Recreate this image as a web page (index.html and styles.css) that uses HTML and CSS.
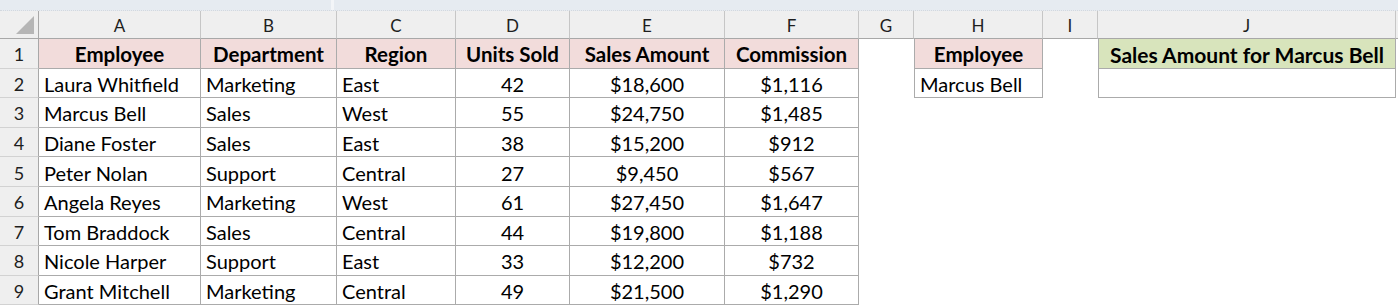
FILE: index.html
```html
<!DOCTYPE html>
<html lang="en">
<head>
<meta charset="utf-8">
<title>Sheet</title>
<link rel="stylesheet" href="styles.css">
</head>
<body>
<div class="topbar"><div class="seg seg-a"></div><div class="seg seg-b"></div></div>
<div class="sheet">
  <div class="corner"><span class="tri"></span></div>
  <div class="colhead">A</div>
  <div class="colhead">B</div>
  <div class="colhead">C</div>
  <div class="colhead">D</div>
  <div class="colhead">E</div>
  <div class="colhead">F</div>
  <div class="colhead">G</div>
  <div class="colhead">H</div>
  <div class="colhead">I</div>
  <div class="colhead">J</div>
  <div class="colhead edge"></div>

  <div class="rowhead">1</div>
  <div class="cell th">Employee</div>
  <div class="cell th">Department</div>
  <div class="cell th">Region</div>
  <div class="cell th">Units Sold</div>
  <div class="cell th">Sales Amount</div>
  <div class="cell th">Commission</div>
  <div class="blank"></div>
  <div class="cell th lb">Employee</div>
  <div class="blank"></div>
  <div class="cell th green lb">Sales Amount for Marcus Bell</div>
  <div class="blank"></div>

  <div class="rowhead">2</div>
  <div class="cell">Laura Whitfield</div>
  <div class="cell">Marketing</div>
  <div class="cell">East</div>
  <div class="cell c">42</div>
  <div class="cell c">$18,600</div>
  <div class="cell c">$1,116</div>
  <div class="blank"></div>
  <div class="cell lb">Marcus Bell</div>
  <div class="blank"></div>
  <div class="cell lb"></div>
  <div class="blank"></div>

  <div class="rowhead">3</div>
  <div class="cell">Marcus Bell</div>
  <div class="cell">Sales</div>
  <div class="cell">West</div>
  <div class="cell c">55</div>
  <div class="cell c">$24,750</div>
  <div class="cell c">$1,485</div>
  <div class="blank wide"></div>

  <div class="rowhead">4</div>
  <div class="cell">Diane Foster</div>
  <div class="cell">Sales</div>
  <div class="cell">East</div>
  <div class="cell c">38</div>
  <div class="cell c">$15,200</div>
  <div class="cell c">$912</div>
  <div class="blank wide"></div>

  <div class="rowhead">5</div>
  <div class="cell">Peter Nolan</div>
  <div class="cell">Support</div>
  <div class="cell">Central</div>
  <div class="cell c">27</div>
  <div class="cell c">$9,450</div>
  <div class="cell c">$567</div>
  <div class="blank wide"></div>

  <div class="rowhead">6</div>
  <div class="cell">Angela Reyes</div>
  <div class="cell">Marketing</div>
  <div class="cell">West</div>
  <div class="cell c">61</div>
  <div class="cell c">$27,450</div>
  <div class="cell c">$1,647</div>
  <div class="blank wide"></div>

  <div class="rowhead">7</div>
  <div class="cell">Tom Braddock</div>
  <div class="cell">Sales</div>
  <div class="cell">Central</div>
  <div class="cell c">44</div>
  <div class="cell c">$19,800</div>
  <div class="cell c">$1,188</div>
  <div class="blank wide"></div>

  <div class="rowhead">8</div>
  <div class="cell">Nicole Harper</div>
  <div class="cell">Support</div>
  <div class="cell">East</div>
  <div class="cell c">33</div>
  <div class="cell c">$12,200</div>
  <div class="cell c">$732</div>
  <div class="blank wide"></div>

  <div class="rowhead">9</div>
  <div class="cell">Grant Mitchell</div>
  <div class="cell">Marketing</div>
  <div class="cell">Central</div>
  <div class="cell c">49</div>
  <div class="cell c">$21,500</div>
  <div class="cell c">$1,290</div>
  <div class="blank wide"></div>
</div>
</body>
</html>
```
FILE: styles.css
```css
* { box-sizing: border-box; }
html, body { margin: 0; padding: 0; background: #ffffff; }
body {
  width: 1398px;
  height: 307px;
  overflow: hidden;
  font-family: Lato, "Liberation Sans", sans-serif;
  color: #000;
}
.topbar {
  height: 11px;
  display: flex;
  background: #e6ebf1;
  border-bottom: 1px dotted #d3d8de;
}
.seg-a { width: 331px; }
.seg-b { width: 3px; background: #f3f5f8; }

.sheet {
  display: grid;
  grid-template-columns: 39px 162px 136px 119px 114px 155px 134px 55px 129px 55px 298px 2px;
  grid-template-rows: 28px repeat(9, 29.6px);
}
.corner {
  background: #efefef;
  border-right: 1px solid #a8a8a8;
  border-bottom: 1px solid #a8a8a8;
  position: relative;
}
.tri {
  position: absolute;
  right: 4px;
  bottom: 4px;
  width: 0;
  height: 0;
  border-left: 18px solid transparent;
  border-bottom: 18px solid #b6b6b6;
}
.colhead {
  background: #efefef;
  border-right: 1px solid #c6c6c6;
  border-bottom: 1px solid #a8a8a8;
  font-size: 17px;
  color: #1e1e1e;
  display: flex;
  align-items: center;
  justify-content: center;
  padding-top: 1px;
}
.colhead.edge { border-right: 0; }
.rowhead {
  background: #efefef;
  border-right: 1px solid #a8a8a8;
  border-bottom: 1px solid #d2d2d2;
  font-size: 18px;
  color: #1e1e1e;
  display: flex;
  align-items: center;
  justify-content: center;
  padding-top: 2px;
}
.cell {
  border-right: 1px solid #ababab;
  border-bottom: 1px solid #ababab;
  font-size: 20px;
  display: flex;
  align-items: center;
  padding: 2px 0 0 5px;
  white-space: nowrap;
  overflow: hidden;
}
.cell.c { justify-content: center; padding-left: 0; }
.cell.th {
  background: #f2dcdb;
  font-weight: 700;
  font-size: 20.5px;
  justify-content: center;
  padding-left: 0;
}
.cell.green { background: #d8e4bc; font-size: 21px; }
.cell.lb { border-left: 1px solid #ababab; }
.blank { background: #fff; }
.blank.wide { grid-column: span 5; }
```
